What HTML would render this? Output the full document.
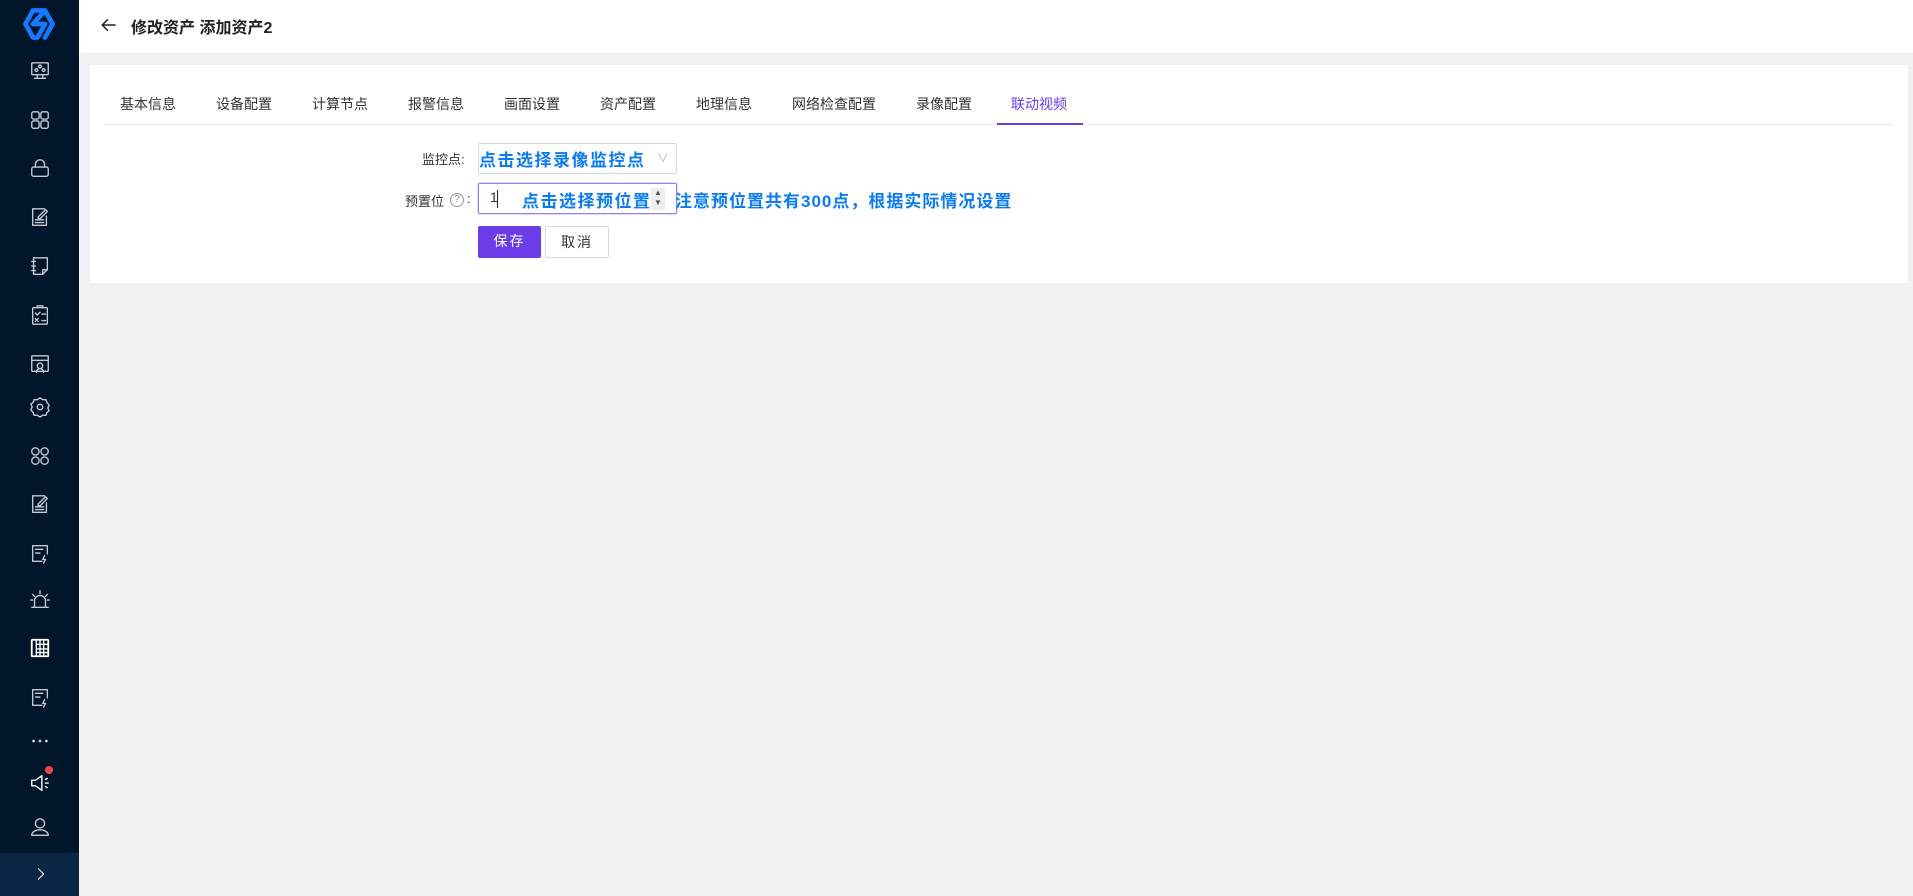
<!DOCTYPE html>
<html><head><meta charset="utf-8">
<style>
*{margin:0;padding:0;box-sizing:border-box}
body{width:1913px;height:896px;overflow:hidden;background:#f0f1f5;font-family:"Liberation Sans","Noto Sans CJK SC",sans-serif;position:relative}
.side{position:absolute;left:0;top:0;width:79px;height:896px;background:#02162b}
.side svg{position:absolute;left:29px;width:22px;height:22px;fill:none;stroke:#c5cad2;stroke-width:1.5;stroke-linecap:round;stroke-linejoin:round}
.bot{position:absolute;left:0;top:853px;width:79px;height:43px;background:#0b2544}
.head{position:absolute;left:79px;top:0;right:0;height:53px;background:#fff}
.title{position:absolute;left:131px;top:14px;font-size:16px;color:#222;font-weight:bold}
.card{position:absolute;left:90px;top:65px;width:1818px;height:218px;background:#fff}
.tab{position:absolute;top:94px;font-size:14px;color:#333}
.line{position:absolute;left:105px;top:124px;width:1787px;height:1px;background:#e8e8e8}
.ul{position:absolute;left:997px;top:123px;width:86px;height:2px;background:#6a3de8}
.lbl{position:absolute;font-size:13px;color:#333}
.box{position:absolute;left:478px;width:199px;height:31px;background:#fff;border:1px solid #d9d9d9;border-radius:2px}
.blue{position:absolute;font-size:17px;font-weight:bold;color:#0a7cf0;letter-spacing:1.5px;white-space:nowrap}
.btn{position:absolute;top:226px;height:32px;font-size:14px;line-height:30px;text-align:center;border-radius:2px;letter-spacing:2px}
</style></head><body>
<div class="side">
<svg viewBox="0 0 24 24" style="left:19px;top:6px;width:40px;height:36px;stroke:#1677ff;stroke-width:3.2"><path d="M8 3h8l5 9-5 9M16 3l-8 9h8l-5 9H8L3 12l5-9"/></svg>
<svg style="top:60px" viewBox="0 0 24 24"><rect x="3" y="3" width="18" height="13" rx="1"/><path d="M9 16v4M15 16v4M6 20h12"/><circle cx="12" cy="7" r="1.5"/><circle cx="8" cy="11" r="1.5"/><circle cx="16" cy="11" r="1.5"/></svg>
<svg style="top:109px" viewBox="0 0 24 24"><rect x="3" y="3" width="8" height="8" rx="2"/><rect x="13" y="3" width="8" height="8" rx="2"/><rect x="3" y="13" width="8" height="8" rx="2"/><rect x="13" y="13" width="8" height="8" rx="2"/></svg>
<svg style="top:157px" viewBox="0 0 24 24"><rect x="3" y="11" width="18" height="10" rx="2"/><path d="M7 11V8a5 5 0 0 1 10 0v3"/></svg>
<svg style="top:206px" viewBox="0 0 24 24"><path d="M17 3H4v18h15V11"/><path d="M7 15h9M7 18h9M10 12l8-8 2 2-8 8h-2z"/></svg>
<svg style="top:255px" viewBox="0 0 24 24"><path d="M5 3h15v13l-5 5H5zM15 21v-5h5M3 7h4M3 12h4M3 17h4"/></svg>
<svg style="top:304px" viewBox="0 0 24 24"><rect x="4" y="4" width="16" height="18" rx="1"/><path d="M9 4V2h6v2M7 10l2 2 3-3M14 11h4M7 16l3 3M10 16l-3 3M14 18h4"/></svg>
<svg style="top:353px" viewBox="0 0 24 24"><rect x="3" y="3" width="18" height="17" rx="1"/><path d="M3 8h18M8 21a4 4 0 0 1 8 0"/><circle cx="12" cy="14" r="3"/></svg>
<svg style="top:396px" viewBox="0 0 24 24"><path d="M12 2l3 2 3.5 0 1 3 2.5 3-1.5 3 1.5 3-2.5 2-1 3H15l-3 2-3-2H5.5l-1-3L2 15l1.5-3L2 9l2.5-2 1-3H9z"/><circle cx="12" cy="12" r="3"/></svg>
<svg style="top:445px" viewBox="0 0 24 24"><circle cx="7" cy="7" r="4"/><circle cx="17" cy="7" r="4"/><circle cx="7" cy="17" r="4"/><circle cx="17" cy="17" r="4"/></svg>
<svg style="top:493px" viewBox="0 0 24 24"><path d="M17 3H4v18h15V11"/><path d="M7 15h9M7 18h9M10 12l8-8 2 2-8 8h-2z"/></svg>
<svg style="top:542px" viewBox="0 0 24 24"><path d="M20 13V4H4v17h10M7 8h8M7 12h5M17 15l-2 4h3l-2 4"/></svg>
<svg style="top:589px" viewBox="0 0 24 24"><path d="M6 19v-6a6 6 0 0 1 12 0v6M3 20h18M12 2v3M4 6l2 2M20 6l-2 2M2 12h2M20 12h2"/></svg>
<svg style="top:637px" viewBox="0 0 24 24"><rect x="3" y="3" width="18" height="18" rx="1" stroke="#fff" stroke-width="2"/><path d="M8 3v18M8 8h13M8 13h13M8 17h13M12 3v18M16 3v18" stroke="#fff"/></svg>
<svg style="top:686px" viewBox="0 0 24 24"><path d="M20 13V4H4v17h10M7 8h8M7 12h5M17 15l-2 4h3l-2 4"/></svg>
<svg style="top:730px" viewBox="0 0 24 24"><circle cx="5" cy="12" r=".8"/><circle cx="12" cy="12" r=".8"/><circle cx="19" cy="12" r=".8"/></svg>
<svg style="top:772px;stroke:#fff" viewBox="0 0 24 24"><path d="M3 9h4l7-5v16l-7-5H3zM18 8l2-1M18 12h3M18 16l2 1"/></svg>
<div style="position:absolute;left:45px;top:766px;width:8px;height:8px;border-radius:50%;background:#f5424a"></div>
<svg style="top:816px" viewBox="0 0 24 24"><circle cx="12" cy="8" r="5"/><path d="M3 21a9 6 0 0 1 18 0z"/></svg>
<div class="bot"><svg style="top:13px;left:33px;width:16px;height:16px;stroke:#fff" viewBox="0 0 24 24"><path d="M8 4l8 8-8 8"/></svg></div>
</div>
<div class="head">
<svg style="position:absolute;left:21px;top:16px;width:18px;height:18px" viewBox="0 0 24 24" fill="none" stroke="#222" stroke-width="2" stroke-linecap="round"><path d="M20 12H4M10 5l-7 7 7 7"/></svg>
</div>
<div class="title">修改资产 添加资产2</div>
<div class="card"></div>
<div class="tab" style="left:120px">基本信息</div>
<div class="tab" style="left:216px">设备配置</div>
<div class="tab" style="left:312px">计算节点</div>
<div class="tab" style="left:408px">报警信息</div>
<div class="tab" style="left:504px">画面设置</div>
<div class="tab" style="left:600px">资产配置</div>
<div class="tab" style="left:696px">地理信息</div>
<div class="tab" style="left:792px">网络检查配置</div>
<div class="tab" style="left:916px">录像配置</div>
<div class="tab" style="left:1011px;color:#6a3de8">联动视频</div>
<div class="line"></div><div class="ul"></div>
<div class="lbl" style="left:422px;top:149px">监控点:</div>
<div class="box" style="top:143px"></div>
<div class="blue" style="left:479px;top:146px">点击选择录像监控点</div>
<div style="position:absolute;left:657px;top:149px;color:#bbb;font-size:12px">∨</div>
<div class="lbl" style="left:405px;top:191px">预置位</div>
<div style="position:absolute;left:450px;top:193px;width:14px;height:14px;border:1px solid #999;border-radius:50%;font-size:10px;line-height:12px;text-align:center;color:#888">?</div>
<div class="lbl" style="left:467px;top:191px">:</div>
<div class="box" style="top:183px;border-color:#9b7df0;box-shadow:0 0 0 1px #e3d9fc"></div>
<div style="position:absolute;left:490px;top:189px;font-size:14px;color:#333">1</div>
<div style="position:absolute;left:497px;top:190px;width:1px;height:18px;background:#222"></div>
<div style="position:absolute;left:651px;top:188px;width:14px;height:22px;background:#eee;font-size:8px;line-height:10px;text-align:center;color:#555">▲<br>▼</div>
<div class="blue" style="left:522px;top:187px">点击选择预位置</div>
<div class="blue" style="left:675px;top:187px;letter-spacing:1px">注意预位置共有300点，根据实际情况设置</div>
<div class="btn" style="left:478px;width:63px;background:#6a3de8;color:#fff">保存</div>
<div class="btn" style="left:545px;width:64px;border:1px solid #d9d9d9;color:#333;background:#fff">取消</div>
</body></html>
